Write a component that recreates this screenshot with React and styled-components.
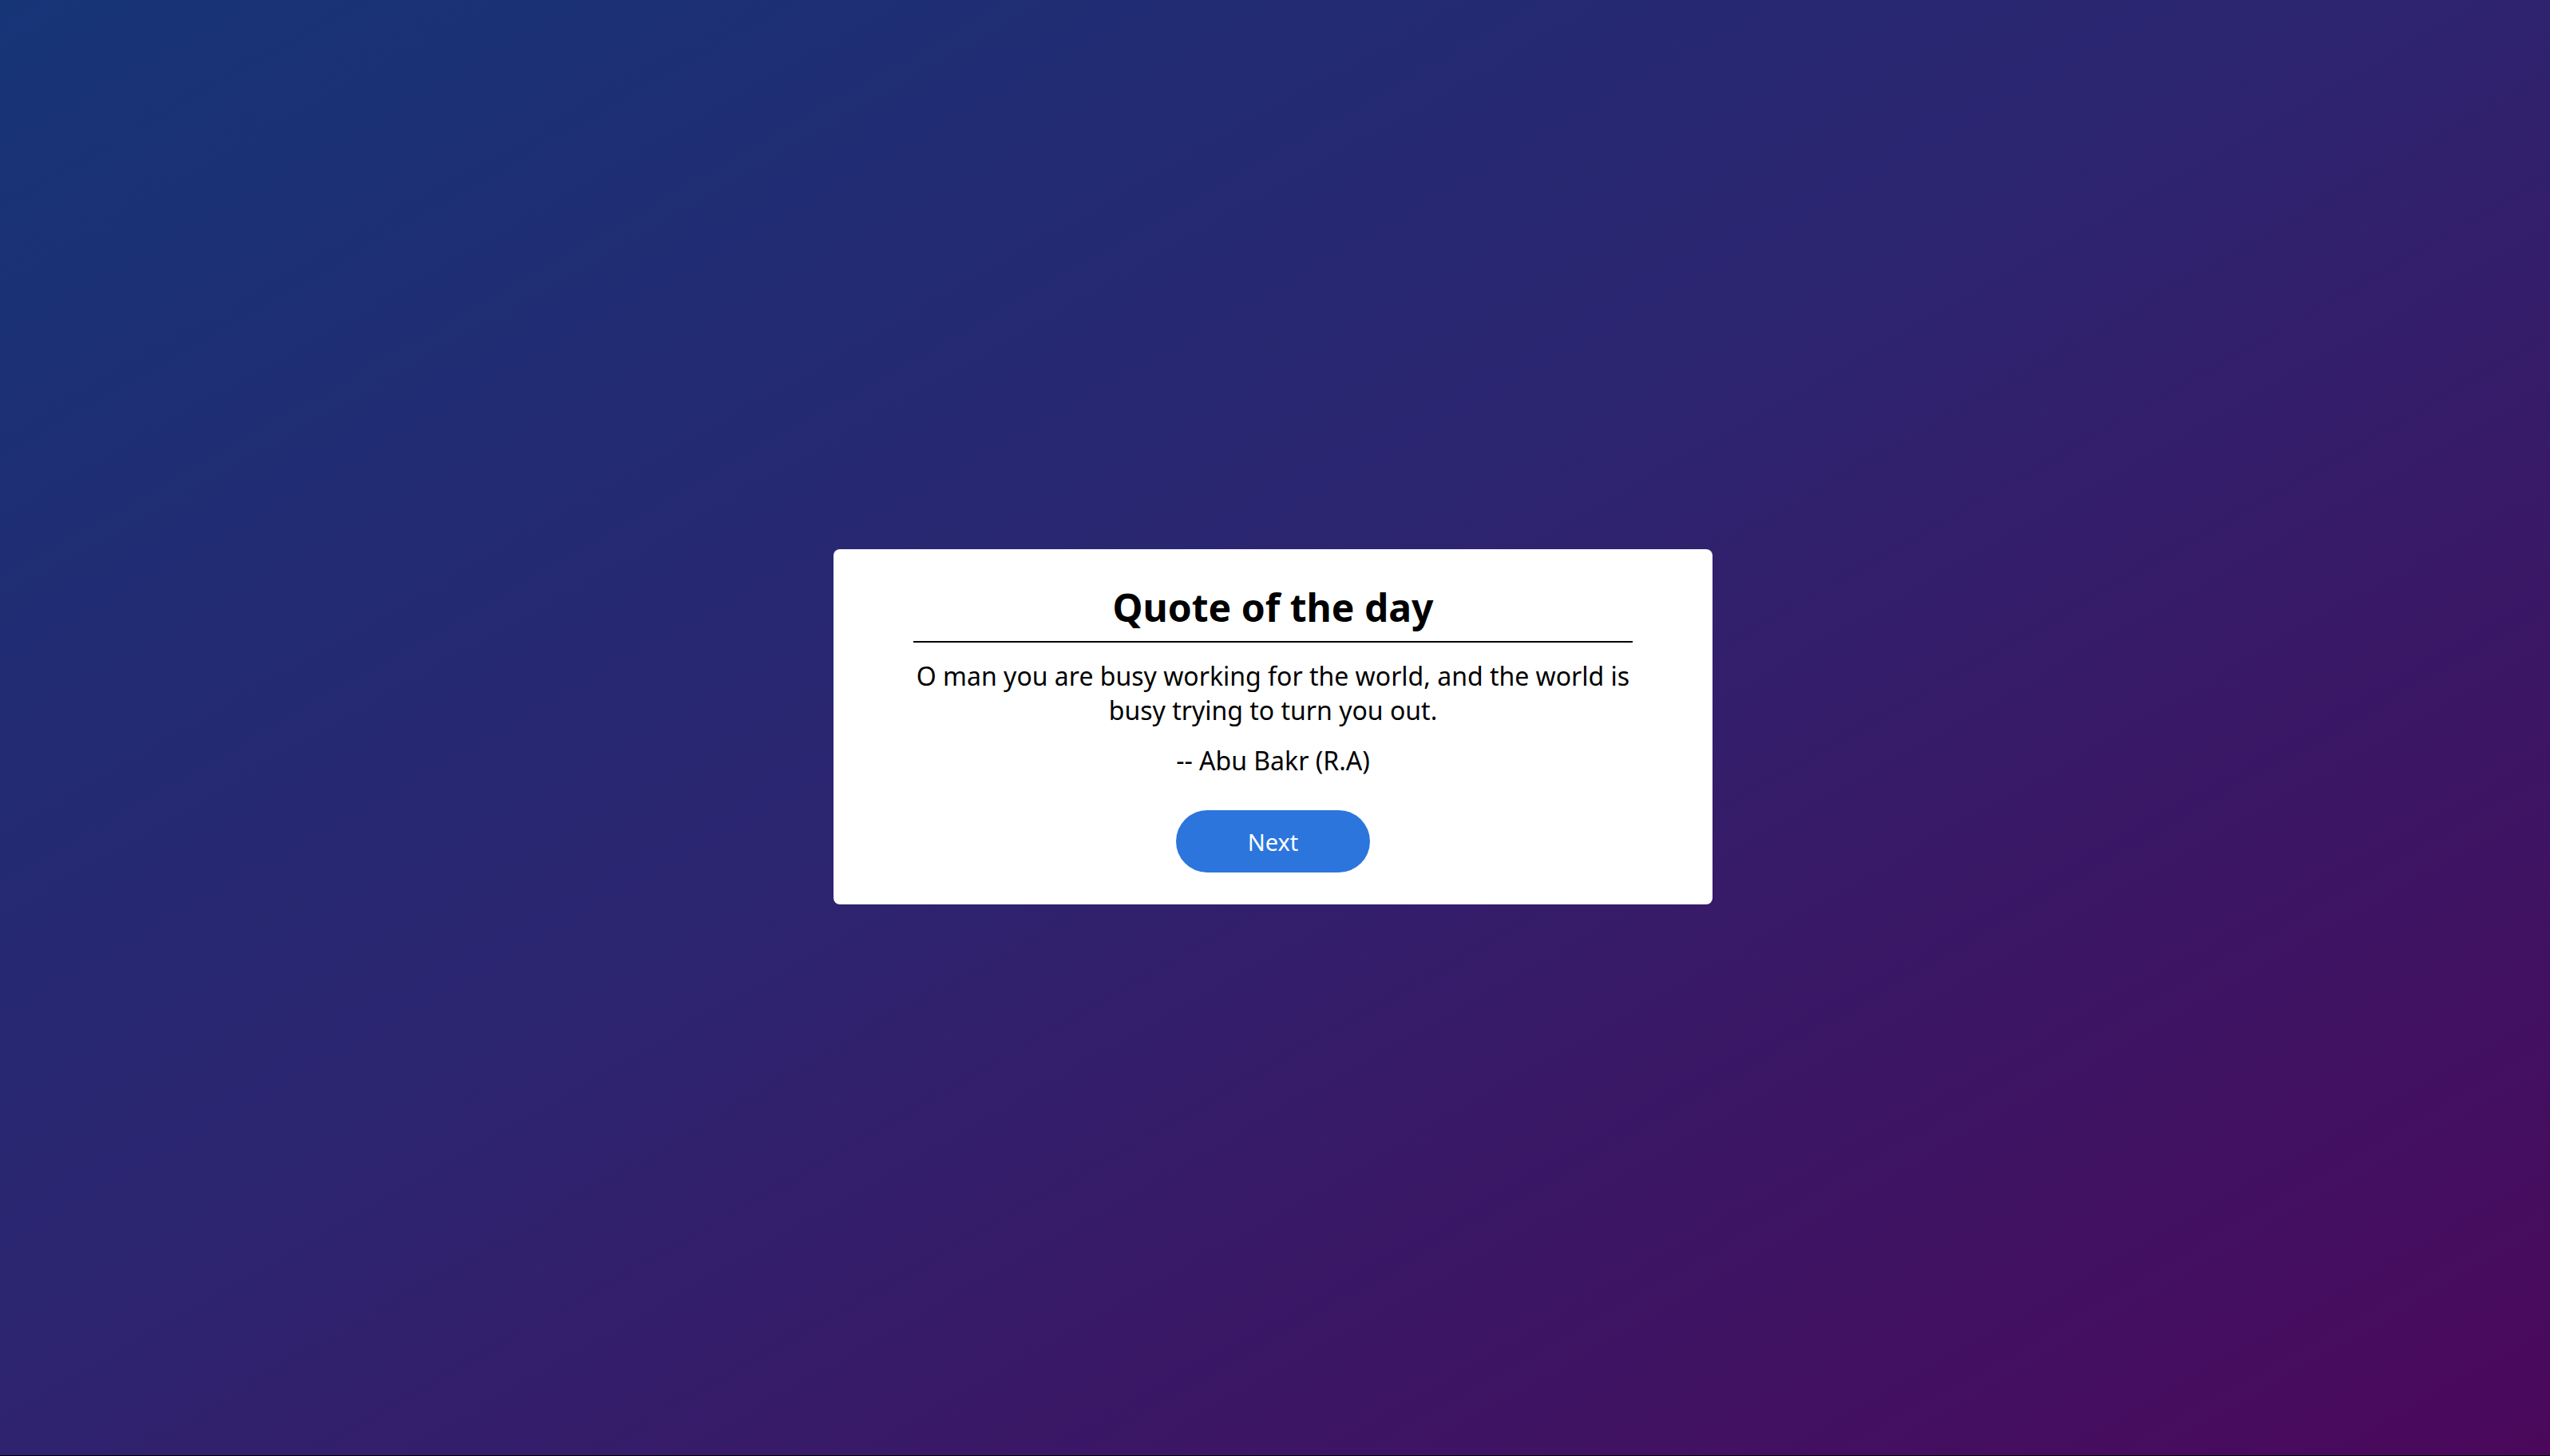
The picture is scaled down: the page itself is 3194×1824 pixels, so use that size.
import React, { useState } from "react";
import styled, { createGlobalStyle } from "styled-components";

const GlobalStyle = createGlobalStyle`
  html, body {
    margin: 0;
    padding: 0;
    background: #000;
  }
  body {
    font-family: "Noto Sans", "Open Sans", sans-serif;
  }
  * { box-sizing: border-box; }
`;

const Page = styled.div`
  min-height: calc(100vh - 1px);
  width: 100%;
  display: flex;
  align-items: center;
  justify-content: center;
  padding: 0 5px 2px 0;
  background: linear-gradient(to bottom right, #163577 0%, #2c2570 45%, #4b085b 100%);
`;

const Card = styled.div`
  width: 1101px;
  background: #ffffff;
  border-radius: 8px;
  padding: 40px 100px;
  display: flex;
  flex-direction: column;
  align-items: center;
  text-align: center;
  color: #000;
`;

const Title = styled.h1`
  margin: 0;
  width: 100%;
  font-size: 48px;
  font-weight: 700;
  padding-bottom: 10px;
  border-bottom: 2px solid #000;
`;

const QuoteText = styled.p`
  margin: 20px 0 0;
  font-size: 32px;
  font-weight: 400;
`;

const Author = styled.p`
  margin: 20px 0 0;
  font-size: 32px;
`;

const NextButton = styled.button`
  margin-top: 41px;
  width: 243px;
  height: 78px;
  border: none;
  border-radius: 39px;
  background: #2c75dd;
  color: #ffffff;
  font-family: "Noto Sans", "Open Sans", sans-serif;
  font-size: 29px;
  cursor: pointer;
`;

const quotes = [
  {
    text: "O man you are busy working for the world, and the world is busy trying to turn you out.",
    author: "Abu Bakr (R.A)",
  },
];

export default function App() {
  const [i, setI] = useState(0);
  const q = quotes[i];
  return (
    <>
      <GlobalStyle />
      <Page>
        <Card>
          <Title>Quote of the day</Title>
          <QuoteText>{q.text}</QuoteText>
          <Author>-- {q.author}</Author>
          <NextButton onClick={() => setI((i + 1) % quotes.length)}>Next</NextButton>
        </Card>
      </Page>
    </>
  );
}
